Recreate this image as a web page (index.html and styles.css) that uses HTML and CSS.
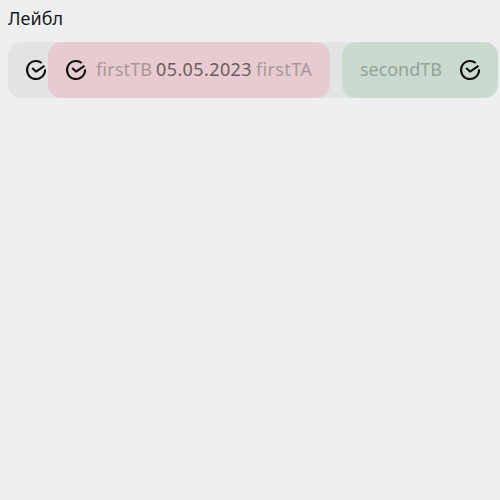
FILE: index.html
```html
<!DOCTYPE html>
<html lang="ru">
<head>
<meta charset="utf-8">
<title>Range field</title>
<link rel="stylesheet" href="styles.css">
</head>
<body>
<svg class="defs" aria-hidden="true">
  <symbol id="check" viewBox="0 0 24 24">
    <path d="M17.7 5.05A9 9 0 1 0 21 11.4" />
    <path d="M8.2 10 12 13.6 20.5 7.8" />
  </symbol>
</svg>
<div class="field">
  <label class="label">Лейбл</label>
  <div class="range">
    <div class="lead"><svg class="icon"><use href="#check"/></svg></div>
    <div class="input first">
      <svg class="icon"><use href="#check"/></svg>
      <div class="content">
        <span class="before">firstTB</span>
        <span class="value">05.05.2023</span>
        <span class="after">firstTA</span>
      </div>
    </div>
    <div class="input second">
      <span class="before">secondTB</span>
      <svg class="icon"><use href="#check"/></svg>
    </div>
  </div>
</div>
</body>
</html>
```
FILE: styles.css
```css
body {
  margin: 0;
  padding: 7px 0 0 8px;
  background: #eeeff1;
  color: #17181a;
  font: 18px/22px "Noto Sans", sans-serif;
  overflow: hidden;
}
.defs { position: absolute; width: 0; height: 0; }
.field { width: 490px; }
.label { display: block; width: 56px; margin-bottom: 13px; letter-spacing: 0.05px; white-space: nowrap; }
.range {
  display: flex;
  height: 56px;
  border-radius: 14px;
  background: #e2e3e5;
}
.lead { display: flex; align-items: center; width: 24px; padding-left: 16px; }
.icon {
  flex: none;
  width: 24px;
  height: 24px;
  fill: none;
  stroke: #101112;
  stroke-width: 2.1;
  stroke-linejoin: round;
}
.input {
  display: flex;
  align-items: center;
  box-sizing: border-box;
  height: 56px;
  border-radius: 14px;
  white-space: nowrap;
}
.first { width: 282px; margin-right: 12px; padding-left: 16px; background: #e8cbd0; }
.second { width: 156px; padding: 0 16px 0 18px; justify-content: space-between; background: #cbdacf; }
.content { display: flex; gap: 4px; margin: 0 0 2px 8px; }
.before, .after { letter-spacing: 0.15px; }
.first .before, .after { color: #a8979a; }
.first .before { width: 56px; }
.value { width: 96px; color: #6a5d60; letter-spacing: 0.4px; }
.after { letter-spacing: 0.35px; }
.second .before { margin-bottom: 2px; color: #94a298; letter-spacing: -0.05px; }
```
